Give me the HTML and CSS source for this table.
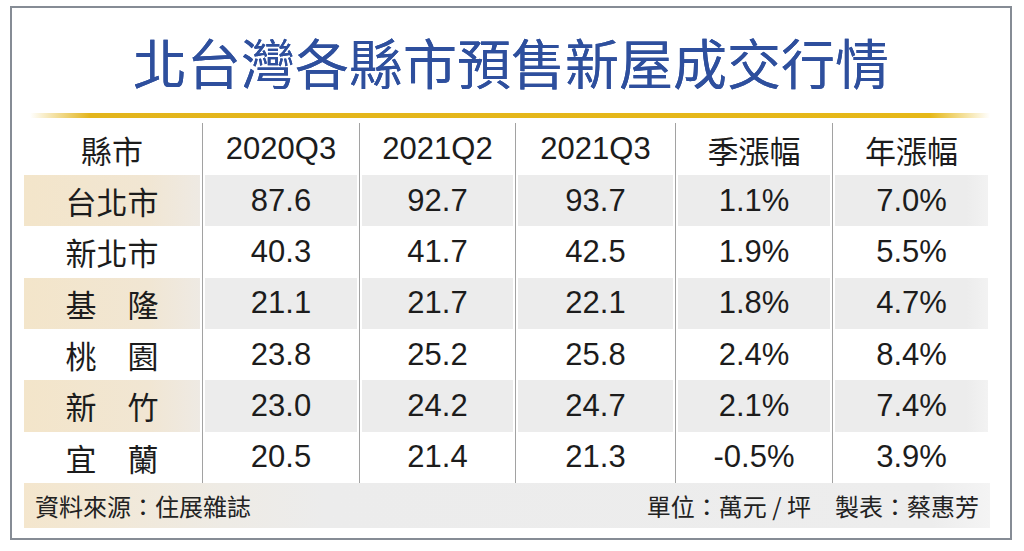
FILE: index.html
```html
<!DOCTYPE html>
<html lang="zh-Hant">
<head>
<meta charset="utf-8">
<title>北台灣各縣市預售新屋成交行情</title>
<link rel="stylesheet" href="styles.css">
</head>
<body>
<div class="frame">
  <h1 class="title">北台灣各縣市預售新屋成交行情</h1>
  <div class="rule"></div>
  <div class="table">
    <div class="row head">
      <div class="cell name">縣市</div>
      <div class="cell">2020Q3</div>
      <div class="cell">2021Q2</div>
      <div class="cell">2021Q3</div>
      <div class="cell">季漲幅</div>
      <div class="cell">年漲幅</div>
    </div>
    <div class="row alt">
      <div class="cell name">台北市</div>
      <div class="cell">87.6</div>
      <div class="cell">92.7</div>
      <div class="cell">93.7</div>
      <div class="cell">1.1%</div>
      <div class="cell">7.0%</div>
    </div>
    <div class="row">
      <div class="cell name">新北市</div>
      <div class="cell">40.3</div>
      <div class="cell">41.7</div>
      <div class="cell">42.5</div>
      <div class="cell">1.9%</div>
      <div class="cell">5.5%</div>
    </div>
    <div class="row alt">
      <div class="cell name">基　隆</div>
      <div class="cell">21.1</div>
      <div class="cell">21.7</div>
      <div class="cell">22.1</div>
      <div class="cell">1.8%</div>
      <div class="cell">4.7%</div>
    </div>
    <div class="row">
      <div class="cell name">桃　園</div>
      <div class="cell">23.8</div>
      <div class="cell">25.2</div>
      <div class="cell">25.8</div>
      <div class="cell">2.4%</div>
      <div class="cell">8.4%</div>
    </div>
    <div class="row alt">
      <div class="cell name">新　竹</div>
      <div class="cell">23.0</div>
      <div class="cell">24.2</div>
      <div class="cell">24.7</div>
      <div class="cell">2.1%</div>
      <div class="cell">7.4%</div>
    </div>
    <div class="row">
      <div class="cell name">宜　蘭</div>
      <div class="cell">20.5</div>
      <div class="cell">21.4</div>
      <div class="cell">21.3</div>
      <div class="cell">-0.5%</div>
      <div class="cell">3.9%</div>
    </div>
  </div>
  <div class="foot">
    <span class="source">資料來源：住展雜誌</span>
    <span class="credit">單位：萬元 / 坪　製表：蔡惠芳</span>
  </div>
</div>
</body>
</html>
```

FILE: styles.css
```css
html, body {
  margin: 0;
  padding: 0;
  background: #ffffff;
}

body {
  width: 1024px;
  height: 551px;
  overflow: hidden;
  font-family: "Liberation Sans", "Noto Sans CJK TC", sans-serif;
  color: #1c1c1c;
}

.frame {
  box-sizing: border-box;
  width: 1002px;
  height: 534px;
  margin: 6px 0 0 10px;
  border: 2px solid #868c95;
  padding: 24px 20px 10px 12px;
}

.title {
  margin: 0;
  height: 60px;
  line-height: 60px;
  font-family: "Noto Sans CJK TC", sans-serif;
  font-weight: 400;
  font-size: 54px;
  letter-spacing: 0;
  text-align: center;
  color: #2e4f9d;
  padding-left: 8px;
  text-shadow: 0 0 0.6px #2e4f9d;
}

.rule {
  height: 5px;
  margin: 21px 0 5px 6px;
  background: linear-gradient(90deg, rgba(230, 184, 20, 0) 0, #e3b51c 60px, #e6b818 900px, rgba(230, 184, 20, 0) 100%);
}

.table {
  display: flex;
  flex-direction: column;
}

.row {
  display: grid;
  grid-template-columns: 178px 157px 156px 160px 157px 158px;
  height: 51.33px;
}

.row.head {
  height: 52px;
}

.cell {
  display: flex;
  align-items: center;
  justify-content: center;
  font-size: 31px;
  border-left: 1px solid #a2a2a2;
  padding: 0 2px;
  background-clip: content-box;
}

.cell.name {
  border-left: none;
  padding-left: 0;
  font-family: "Noto Sans CJK TC", sans-serif;
}

.head .cell {
  font-size: 31px;
}

.alt .cell {
  background-color: #ececec;
}

.alt .cell.name {
  background-image: linear-gradient(90deg, #f3e5ca 0, #f1e6d3 70%, #eeeae4 100%);
}

.alt .cell:last-child {
  background-image: linear-gradient(90deg, #ececec 0, #ececec 85%, #f3f3f3 100%);
}

.foot {
  height: 45px;
  display: flex;
  align-items: center;
  justify-content: space-between;
  padding: 0 11px;
  font-family: "Noto Sans CJK TC", sans-serif;
  font-size: 24px;
  color: #222222;
  background: linear-gradient(90deg, #f4e6cd 0, #eeebe5 200px, #ececec 300px, #ededed 94%, #f4f4f4 100%);
}
```
